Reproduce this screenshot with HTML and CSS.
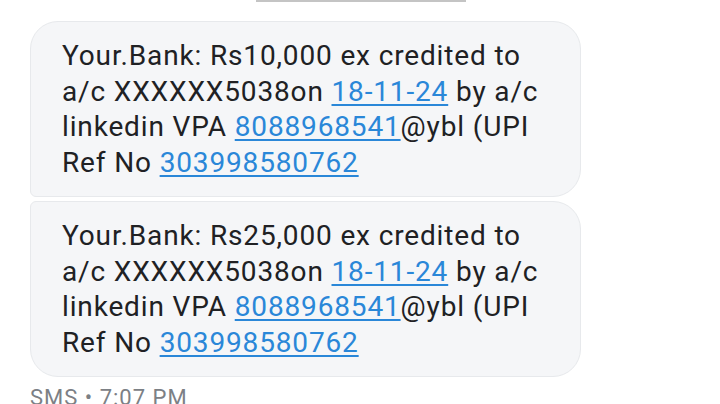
FILE: index.html
```html
<!DOCTYPE html>
<html>
<head>
<meta charset="utf-8">
<link rel="stylesheet" href="styles.css">
</head>
<body>
<div class="thread">
  <div class="prev-edge"></div>
  <div class="bubble first">
    Your.Bank: Rs10,000 ex credited to<br>a/c XXXXXX5038on <a class="link">18-11-24</a> by a/c<br>linkedin VPA <a class="link">8088968541</a>@ybl (UPI<br>Ref No <a class="link">303998580762</a>
  </div>
  <div class="bubble last">
    Your.Bank: Rs25,000 ex credited to<br>a/c XXXXXX5038on <a class="link">18-11-24</a> by a/c<br>linkedin VPA <a class="link">8088968541</a>@ybl (UPI<br>Ref No <a class="link">303998580762</a>
  </div>
  <div class="meta">SMS • 7:07 PM</div>
</div>
</body>
</html>
```
FILE: styles.css
```css
html, body {
  margin: 0;
  padding: 0;
  background: #ffffff;
  width: 720px;
  height: 404px;
  overflow: hidden;
}
.thread {
  display: flex;
  flex-direction: column;
  align-items: flex-start;
  padding-left: 30px;
  font-family: Roboto, "Liberation Sans", sans-serif;
}
.prev-edge {
  width: 210px;
  height: 2px;
  margin-left: 226px;
  background: #c4c4c4;
  margin-bottom: 19px;
}
.bubble {
  box-sizing: border-box;
  width: 551px;
  background: #f5f6f8;
  border: 1px solid #e7e9ec;
  color: #202124;
  font-size: 28px;
  letter-spacing: 0.85px;
  line-height: 35.7px;
  padding: 16px 12px 15px 31px;
  white-space: nowrap;
}
.bubble.first {
  border-radius: 28px 28px 28px 6px;
  margin-bottom: 4px;
}
.bubble.last {
  border-radius: 6px 28px 28px 28px;
}
.link {
  color: #2a87d8;
  text-decoration: underline;
  text-decoration-thickness: 1.5px;
  text-underline-offset: 3px;
}
.meta {
  margin-top: 8px;
  font-size: 22px;
  color: #7c8085;
  letter-spacing: 1px;
}
```
